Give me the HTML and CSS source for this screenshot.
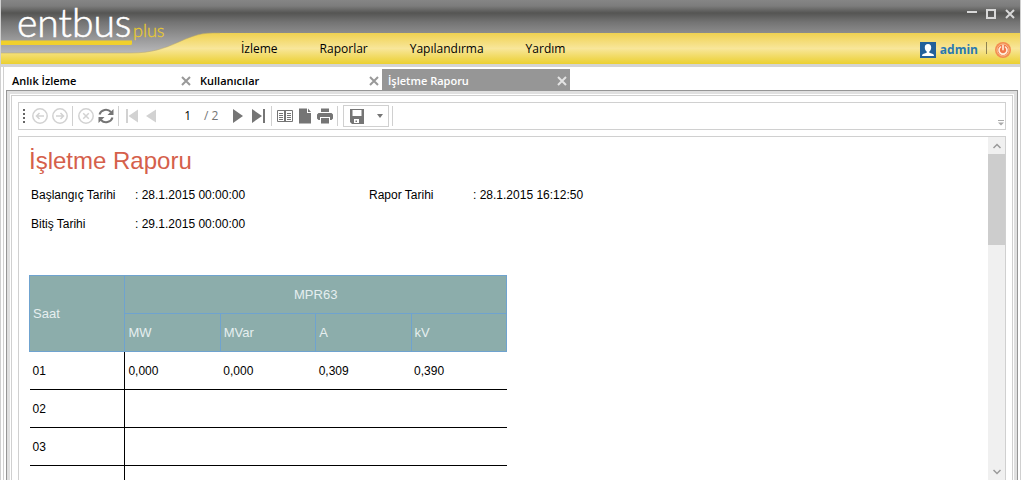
FILE: index.html
```html
<!DOCTYPE html>
<html lang="tr">
<head>
<meta charset="utf-8">
<meta name="viewport" content="width=device-width, initial-scale=1">
<title>entbus plus</title>
<link rel="stylesheet" href="styles.css">
</head>
<body>
<div class="window">
  <header class="header">
    <svg class="brand" viewBox="0 0 219 64" role="img" aria-label="entbus plus">
      <defs>
        <linearGradient id="gold" gradientUnits="userSpaceOnUse" x1="0" y1="33" x2="0" y2="64">
          <stop offset="0" stop-color="#efd150"/>
          <stop offset="0.5" stop-color="#f8e69a"/>
          <stop offset="1" stop-color="#ebd030"/>
        </linearGradient>
      </defs>
      <path d="M0 53H130C172 53 182 33 212 33H219V64H0Z" fill="url(#gold)"/>
      <path d="M0 53H130C172 53 182 33 212 33H219" fill="none" stroke="#b9a766" stroke-opacity=".5"/>
      <path d="M0 40.500H131V43.500Q131 45 129.500 45H0Z" fill="#f0d02c"/>
      <text class="brand-name" x="16" y="37">entbus</text>
      <text class="brand-plus" x="132" y="37">plus</text>
    </svg>
    <div class="header-main">
      <div class="window-controls">
        <button class="window-button" aria-label="Simge durumuna küçült"><svg width="10" height="10" viewBox="0 0 10 10"><path d="M0 3h10" stroke-width="2"/></svg></button>
        <button class="window-button" aria-label="Ekranı kapla"><svg width="10" height="10" viewBox="0 0 10 10"><path d="M1 1h8v8H1z" stroke-width="2"/></svg></button>
        <button class="window-button" aria-label="Kapat"><svg width="10" height="10" viewBox="0 0 10 10"><path d="M1 1l8 8M9 1L1 9" stroke-width="2"/></svg></button>
      </div>
      <div class="menubar">
        <nav class="menu">
          <a href="#">İzleme</a>
          <a href="#">Raporlar</a>
          <a href="#">Yapılandırma</a>
          <a href="#">Yardım</a>
        </nav>
        <div class="account">
          <a class="user" href="#">
            <svg width="16" height="16" viewBox="0 0 16 16"><path d="M0 0h16v16H0z" fill="#22609a"/><path d="M8 2c2.200 0 3.200 1.500 3.200 3.500S10 9.300 9.300 9.600v1.100l3.700 1.200q1 .4 1 2.100H2q0-1.700 1-2.100l3.700-1.200V9.600C6 9.300 4.800 7.500 4.800 5.500S5.800 2 8 2z" fill="#fff"/></svg>
            admin
          </a>
          <span class="account-divider"></span>
          <button class="power" aria-label="Çıkış">
            <svg width="16" height="16" viewBox="0 0 16 16"><circle cx="8" cy="8" r="8" fill="#f48c50"/><circle cx="8" cy="8" r="6" fill="#f0764a" stroke="#f9c08c"/><path d="M5.500 5a4 4 0 1 0 5 0M8 3.200v4.600" fill="none" stroke="#fff0dc" stroke-width="1.600" stroke-linecap="round"/></svg>
          </button>
        </div>
      </div>
    </div>
  </header>

  <main class="workspace">
    <div class="tabs">
      <div class="tab"><button class="tab-label">Anlık İzleme</button><button class="tab-close" aria-label="Anlık İzleme sekmesini kapat"><svg width="10" height="10" viewBox="0 0 10 10"><path d="M1 1l8 8M9 1L1 9"/></svg></button></div>
      <div class="tab"><button class="tab-label">Kullanıcılar</button><button class="tab-close" aria-label="Kullanıcılar sekmesini kapat"><svg width="10" height="10" viewBox="0 0 10 10"><path d="M1 1l8 8M9 1L1 9"/></svg></button></div>
      <div class="tab tab-active"><button class="tab-label">İşletme Raporu</button><button class="tab-close" aria-label="İşletme Raporu sekmesini kapat"><svg width="10" height="10" viewBox="0 0 10 10"><path d="M1 1l8 8M9 1L1 9"/></svg></button></div>
    </div>

    <div class="pane">
      <div class="pane-inner">
        <div class="toolbar">
          <span class="grip"></span>
          <button class="tool tool-off" aria-label="Geri"><svg viewBox="0 0 16 16"><g class="line"><circle cx="8" cy="8" r="7.200"/><path d="M4.500 8H12M7.500 5l-3 3 3 3"/></g></svg></button>
          <button class="tool tool-off" aria-label="İleri"><svg viewBox="0 0 16 16"><g class="line"><circle cx="8" cy="8" r="7.200"/><path d="M4 8h7.500M8.500 5l3 3-3 3"/></g></svg></button>
          <span class="divider"></span>
          <button class="tool tool-off" aria-label="Durdur"><svg viewBox="0 0 16 16"><g class="line"><circle cx="8" cy="8" r="7.200"/><path d="M5.200 5.200l5.600 5.600M10.800 5.200l-5.600 5.600"/></g></svg></button>
          <button class="tool" aria-label="Yenile"><svg viewBox="0 0 16 16"><path d="M1.500 6.500C3 1.500 9.500.2 13 4M14.500 9.500C13 14.500 6.500 15.800 3 12" fill="none" stroke="currentColor" stroke-width="2"/><path d="M15.500 1v6H9.500zM.5 15V9h6z"/></svg></button>
          <span class="divider"></span>
          <button class="tool tool-off" aria-label="İlk sayfa"><svg viewBox="0 0 16 16"><path d="M2 1h2v14H2zM14 1.500v13L4.500 8z"/></svg></button>
          <button class="tool tool-off" aria-label="Önceki sayfa"><svg viewBox="0 0 16 16"><path d="M12 1.500v13L2 8z"/></svg></button>
          <div class="pager"><input class="page-input" type="text" value="1" aria-label="Sayfa"><span>/ 2</span></div>
          <button class="tool" aria-label="Sonraki sayfa"><svg viewBox="0 0 16 16"><path d="M2 1v14l10-7z"/></svg></button>
          <button class="tool" aria-label="Son sayfa"><svg viewBox="0 0 16 16"><path d="M1 1v14l10-7zM12 1h2v14h-2z"/></svg></button>
          <span class="divider"></span>
          <button class="tool" aria-label="Sayfa görünümü"><svg viewBox="0 0 16 16"><path d="M.5 2.500h15v11H.5zM7.500 2.500v11M8.500 2.500v11M2 5.500h4M2 7.500h4M2 9.500h4M2 11.500h4M10 5.500h4M10 7.500h4M10 9.500h4M10 11.500h4" fill="none" stroke="currentColor"/></svg></button>
          <button class="tool" aria-label="Sayfa yapısı"><svg viewBox="0 0 16 16"><path d="M2 0.500h8V5h4v10.500H2zM11 .5L14 4h-3z"/></svg></button>
          <button class="tool" aria-label="Yazdır"><svg viewBox="0 0 16 16"><path d="M4 .5h8V4H4zM1.500 5h13L16 6.500v4L14.500 12H13V9H3v3H1.500L0 10.500v-4zM4 10h8v5.500H4z"/></svg></button>
          <span class="divider"></span>
          <button class="save" aria-label="Dışa aktar">
            <svg width="14" height="15" viewBox="0 0 14 15"><path fill-rule="evenodd" d="M0 0h14v15H2l-2-2zM2.500 1v6h9V1zM4 10v4h5v-4z"/><path d="M5.500 11.500h1.500v1.500H5.500z"/></svg>
            <svg width="6" height="4" viewBox="0 0 6 4"><path d="M0 0h6L3 4z"/></svg>
          </button>
          <span class="divider"></span>
          <button class="overflow" aria-label="Diğer araçlar"><svg width="6" height="6" viewBox="0 0 6 6"><path d="M0 0h6v1H0zM0 2.500h6L3 5.500z"/></svg></button>
        </div>

        <section class="viewer">
          <div class="report">
            <h1>İşletme Raporu</h1>
            <dl class="facts">
              <dt>Başlangıç Tarihi</dt><dd>: 28.1.2015 00:00:00</dd>
              <dt>Rapor Tarihi</dt><dd>: 28.1.2015 16:12:50</dd>
              <dt>Bitiş Tarihi</dt><dd>: 29.1.2015 00:00:00</dd>
            </dl>
            <table class="readings">
              <thead>
                <tr><th rowspan="2" scope="col">Saat</th><th class="device" colspan="4" scope="colgroup">MPR63</th></tr>
                <tr><th scope="col">MW</th><th scope="col">MVar</th><th scope="col">A</th><th scope="col">kV</th></tr>
              </thead>
              <tbody>
                <tr><th scope="row">01</th><td>0,000</td><td>0,000</td><td>0,309</td><td>0,390</td></tr>
                <tr><th scope="row">02</th><td></td><td></td><td></td><td></td></tr>
                <tr><th scope="row">03</th><td></td><td></td><td></td><td></td></tr>
                <tr><th scope="row">04</th><td></td><td></td><td></td><td></td></tr>
              </tbody>
            </table>
          </div>
          <div class="scrollbar">
            <button class="scroll-button" aria-label="Yukarı kaydır"><svg width="8" height="6" viewBox="0 0 8 6"><path d="M.5 5L4 1.500 7.500 5"/></svg></button>
            <div class="scroll-thumb"></div>
            <button class="scroll-button scroll-down" aria-label="Aşağı kaydır"><svg width="8" height="6" viewBox="0 0 8 6"><path d="M.5 1L4 4.500 7.500 1"/></svg></button>
          </div>
        </section>
      </div>
    </div>
  </main>
</div>
</body>
</html>
```
FILE: styles.css
```css
* {
  box-sizing: border-box;
}

body {
  margin: 0;
  background: #fff;
  color: #000;
  font: 12px/18px "Open Sans", "Noto Sans", sans-serif;
}

button {
  display: flex;
  align-items: center;
  justify-content: center;
  margin: 0;
  padding: 0;
  border: 0;
  background: none;
  color: inherit;
  font: inherit;
}

a {
  color: inherit;
  text-decoration: none;
}

svg {
  display: block;
  flex: none;
}

.window {
  display: flex;
  flex-direction: column;
  height: 100vh;
  overflow: hidden;
  border: solid #d0d0d0;
  border-width: 0 1px;
}

/* Header */
.header {
  display: flex;
  flex: none;
  height: 67px;
  border-bottom: 3px solid #d4d4d4;
  background: linear-gradient(#858585 0, #7c7c7c 6px, #555553 13px, #737373 22px, #8c8c8c 33px, #b8b8ba 53px);
}

.brand {
  width: 219px;
  height: 64px;
}

.brand-name {
  fill: #fff;
  stroke: #fff;
  stroke-width: 0.6px;
  font: 300 39px Lato, sans-serif;
}

.brand-plus {
  fill: #e8c92f;
  stroke: #e8c92f;
  stroke-width: 0.3px;
  font: 300 18px Lato, sans-serif;
}

.header-main {
  display: flex;
  flex: 1;
  flex-direction: column;
}

.window-controls {
  display: flex;
  justify-content: flex-end;
  gap: 9px;
  height: 33px;
  padding: 9px 5px 0 0;
}

.window-button {
  width: 10px;
  height: 10px;
}

.window-button path {
  fill: none;
  stroke: #d8d8d8;
}

.menubar {
  display: flex;
  flex: 1;
  align-items: center;
  justify-content: space-between;
  background: linear-gradient(#efd150, #f8e69a 50%, #ebd030);
}

.menu {
  display: flex;
}

.menu a {
  padding: 0 21px;
}

.account,
.user {
  display: flex;
  align-items: center;
}

.account {
  gap: 8px;
  padding: 2px 9px 0 0;
}

.user {
  gap: 4px;
  color: #2878b0;
  font-weight: 700;
}

.account-divider {
  width: 1px;
  height: 12px;
  margin-bottom: 4px;
  background: #8d8150;
}

/* Tabs */
.workspace {
  display: flex;
  flex: 1;
  flex-direction: column;
  min-height: 0;
  margin-left: 2px;
  padding: 2px 2px 0;
  border-left: 1px solid #d0d0d0;
}

.tabs {
  display: flex;
  flex: none;
}

.tab {
  display: flex;
  align-items: center;
  justify-content: space-between;
  width: 188px;
  height: 21px;
  padding: 2px 3px 0 6px;
  font-size: 11px;
  font-weight: 600;
}

.tab-close svg {
  fill: none;
  stroke: #999;
  stroke-width: 2;
}

.tab-active {
  background: #969696;
  color: #fff;
}

.tab-active .tab-close svg {
  stroke: #e4e4e4;
}

/* Framed pane */
.pane {
  display: flex;
  flex: 1;
  min-height: 0;
  border: solid #969696;
  border-width: 1px 1px 0;
}

.pane-inner {
  display: flex;
  flex: 1;
  flex-direction: column;
  gap: 6px;
  min-width: 0;
  margin: 4px 4px 0;
  padding: 6px 6px 0;
  border: solid #d0d0d0;
  border-width: 1px 1px 0;
  box-shadow: 0 0 0 1px #fff, 0 0 0 4px #e0e0e0;
}

/* Toolbar */
.toolbar {
  display: flex;
  flex: none;
  align-items: center;
  height: 28px;
  padding-left: 4px;
  border: 1px solid #d0d0d0;
  color: #757575;
}

.toolbar svg {
  fill: currentColor;
}

.grip {
  width: 2px;
  height: 14px;
  margin-right: 5px;
  background: repeating-linear-gradient(#666 0 2px, transparent 2px 4px);
}

.tool {
  width: 20px;
  height: 20px;
}

.tool svg {
  width: 16px;
  height: 16px;
}

.tool-off {
  color: #d2d2d2;
}

.toolbar .line {
  fill: none;
  stroke: currentColor;
  stroke-width: 1.5;
}

.divider {
  width: 1px;
  height: 20px;
  margin: 0 3px 0 2px;
  background: #d0d0d0;
}

.pager {
  display: flex;
  gap: 4px;
  width: 67px;
}

.page-input {
  width: 38px;
  height: 18px;
  padding: 0 9px 0 0;
  border: 0;
  background: none;
  color: #000;
  font: inherit;
  text-align: right;
}

.save {
  gap: 13px;
  width: 46px;
  height: 22px;
  margin: 0 1px 0 2px;
  border: 1px solid #d0d0d0;
}

.overflow {
  align-self: flex-end;
  margin: 0 1px 3px auto;
  color: #aaa;
}

/* Report viewer */
.viewer {
  display: flex;
  flex: 1;
  min-height: 0;
  border: solid #d0d0d0;
  border-width: 1px 1px 0;
}

.report {
  flex: 1;
  min-width: 0;
  overflow: hidden;
  padding: 8px 10px 0;
  font: 12px/16px "Liberation Sans", Arial, sans-serif;
}

h1 {
  margin: 0 0 10px;
  color: #d5604b;
  font-size: 24px;
  font-weight: 400;
  line-height: 32px;
}

.facts {
  display: grid;
  grid-template-columns: 104px 234px 104px auto;
  justify-content: start;
  row-gap: 13px;
  margin: 0 0 43px;
  padding-left: 2px;
}

.facts dd {
  margin: 0;
}

.readings {
  width: 478px;
  table-layout: fixed;
  border-collapse: collapse;
}

.readings th,
.readings td {
  height: 38px;
  padding: 0 3px;
  font-weight: 400;
  text-align: left;
}

.readings thead th {
  border: 1px solid #6fa3cf;
  background: #8cadab;
  color: #e6eff0;
  font-size: 13px;
}

.readings thead .device {
  text-align: center;
}

.readings tbody tr {
  border-bottom: 1px solid #000;
}

.readings tbody th {
  border-right: 1px solid #000;
}

/* Scrollbar */
.scrollbar {
  display: flex;
  flex: none;
  flex-direction: column;
  width: 17px;
  background: #f0f0f0;
}

.scroll-button {
  width: 17px;
  height: 17px;
}

.scroll-button path {
  fill: none;
  stroke: #999;
  stroke-width: 1.5;
}

.scroll-thumb {
  height: 91px;
  background: #cdcdcd;
}

.scroll-down {
  margin-top: auto;
}
```
